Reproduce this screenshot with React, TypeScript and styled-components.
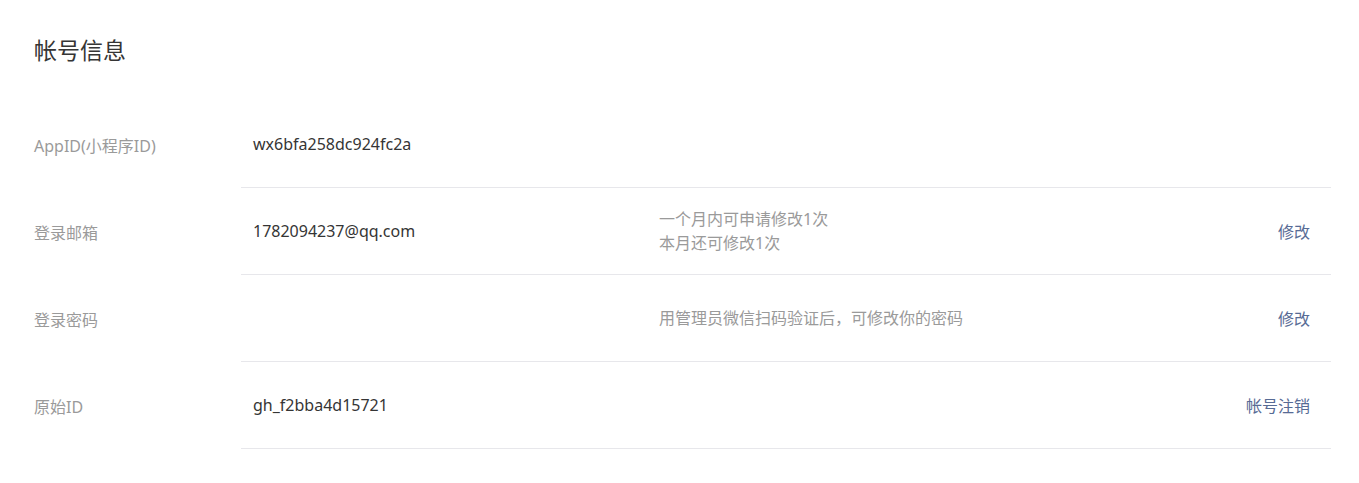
import styled, { createGlobalStyle } from 'styled-components';

const GlobalStyle = createGlobalStyle`
  html, body {
    margin: 0;
    padding: 0;
    background: #fff;
  }
  body {
    font-family: "Noto Sans", "Noto Sans CJK SC", sans-serif;
    color: #353535;
  }
`;

const accountRows = [
  { label: 'AppID(小程序ID)', value: 'wx6bfa258dc924fc2a' },
  {
    label: '登录邮箱',
    value: '1782094237@qq.com',
    hint: ['一个月内可申请修改1次', '本月还可修改1次'],
    action: '修改',
  },
  {
    label: '登录密码',
    value: '',
    hint: ['用管理员微信扫码验证后，可修改你的密码'],
    action: '修改',
  },
  { label: '原始ID', value: 'gh_f2bba4d15721', action: '帐号注销' },
];

export const Page = styled.div`
  padding: 36px 28px 0 34px;
`;

export const Title = styled.h2`
  margin: 0 0 37px;
  font-size: 23px;
  line-height: 28px;
  font-weight: 400;
  color: #353535;
`;

export const List = styled.div`
  display: flex;
  flex-direction: column;
`;

export const Row = styled.div`
  display: grid;
  grid-template-columns: 207px 1fr;
  font-size: 16px;
`;

export const Label = styled.div`
  display: flex;
  align-items: center;
  color: #9a9a9a;
`;

export const Body = styled.div`
  display: flex;
  align-items: center;
  height: 86px;
  border-bottom: 1px solid #e7e7eb;
`;

export const Value = styled.div`
  width: 406px;
  padding-left: 12px;
  color: #353535;
`;

export const Hint = styled.div`
  flex: 1;
  color: #9a9a9a;
  font-size: 16px;
  line-height: 24px;
`;

export const Action = styled.a`
  padding-right: 21px;
  color: #576b95;
  text-decoration: none;
  cursor: pointer;
`;

export default function App() {
  return (
    <Page>
      <GlobalStyle />
      <Title>帐号信息</Title>
      <List>
        {accountRows.map((row) => (
          <Row key={row.label}>
            <Label>{row.label}</Label>
            <Body>
              <Value>{row.value}</Value>
              <Hint>
                {row.hint?.map((line) => (
                  <div key={line}>{line}</div>
                ))}
              </Hint>
              {row.action && <Action>{row.action}</Action>}
            </Body>
          </Row>
        ))}
      </List>
    </Page>
  );
}
